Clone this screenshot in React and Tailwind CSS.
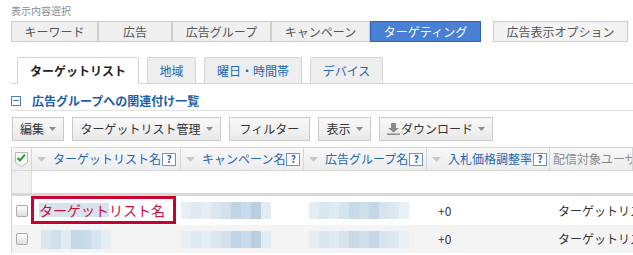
import React from 'react'

const topTabs = [
     { label: 'キーワード', width: 'w-[87px]' },
     { label: '広告', width: 'w-[74px]' },
     { label: '広告グループ', width: 'w-[99px]' },
     { label: 'キャンペーン', width: 'w-[99px]' },
]

const subTabs = [
     { label: '地域', width: 'w-[49px]' },
     { label: '曜日・時間帯', width: 'w-[98px]' },
     { label: 'デバイス', width: 'w-[73px]' },
]

// blurred cells in the screenshot, one class per 10px block
const mosaicA = ['bg-[#e8eff5]', 'bg-[#dfe9f1]', 'bg-[#e6eef4]', 'bg-[#dbe6ef]', 'bg-[#d2e1ec]', 'bg-[#bfd4e4]', 'bg-[#c9dbe8]', 'bg-[#b8cfe1]', 'bg-[#e3ecf3]']
const mosaicB = ['bg-[#e4edf4]', 'bg-[#d9e6ef]', 'bg-[#e1ebf2]', 'bg-[#d5e3ed]', 'bg-[#c6d9e7]', 'bg-[#cfdfea]', 'bg-[#c2d6e5]', 'bg-[#d7e4ee]', 'bg-[#dde8f1]', 'bg-[#e9f0f5]']
const mosaicC = ['bg-[#d9e6ef]', 'bg-[#cfdfeb]', 'bg-[#e0eaf2]', 'bg-[#c5d8e6]', 'bg-[#c9dbe8]', 'bg-[#d8e5ee]', 'bg-[#e6eef4]']

function Mosaic({ cells, className }) {
     return (
          <div className={`flex ${className}`}>
               {cells.map((c, i) => (
                    <div key={i} className={`h-full w-[10px] ${c}`} />
               ))}
          </div>
     )
}

function Caret() {
     return (
          <svg width="7" height="4" viewBox="0 0 7 4" className="ml-[5px]">
               <path d="M0 0h7L3.5 4z" fill="#8a8a8a" />
          </svg>
     )
}

function SortArrow() {
     return (
          <svg width="9" height="5" viewBox="0 0 9 5" className="mr-[7px] shrink-0">
               <path d="M0 0h9L4.5 5z" fill="#c8c8c8" />
          </svg>
     )
}

function HelpIcon() {
     return (
          <span className="ml-[1px] inline-flex h-[13px] w-[14px] shrink-0 items-center justify-center border border-[#6d93c9] bg-white text-[10px] font-bold leading-none text-[#2b62b0]">
               ?
          </span>
     )
}

function RowCheckbox() {
     return <span className="block h-[12px] w-[12px] rounded-[2px] border border-[#a9a9a9] bg-gradient-to-b from-white to-[#dedede]" />
}

function HeaderCell({ label, sortable = true, help = true }) {
     return (
          <div className="flex h-full items-center overflow-hidden whitespace-nowrap border-r border-[#d6d6d6] pl-[5px]">
               {sortable && <SortArrow />}
               <span className={sortable ? 'text-[#1d67b3]' : 'text-[#8a8a8a] -ml-[2px]'}>{label}</span>
               {help && <HelpIcon />}
          </div>
     )
}

const App = () => {
     return (
          <div className="h-[255px] w-[633px] overflow-hidden bg-white font-['Noto_Sans_CJK_JP',sans-serif] text-[12px] text-[#333]">

               {/* 表示内容選択 */}
               <div className="pl-[11px] pt-[4px] text-[10px] leading-[14px] text-[#8c8c8c]">表示内容選択</div>

               {/* top view switch */}
               <div className="mt-[3px] flex pl-[11px]">
                    {topTabs.map((t) => (
                         <div key={t.label} className={`flex h-[21px] items-center justify-center border border-[#cdcdcd] bg-[#efefef] leading-none text-[#555] ${t.width}`}>
                              {t.label}
                         </div>
                    ))}
                    <div className="flex h-[21px] w-[111px] items-center justify-center border border-[#2f64b6] bg-[#4a80d3] leading-none text-white">
                         ターゲティング
                    </div>
                    <div className="ml-[12px] flex h-[21px] w-[135px] items-center justify-center border border-[#cdcdcd] bg-[#f3f3f3] leading-none text-[#555]">
                         広告表示オプション
                    </div>
               </div>

               {/* sub tabs */}
               <div className="ml-[11px] mt-[15px] flex items-end gap-[8px] border-b border-[#d4d4d4] pl-[6px]">
                    <div className="-mb-[1px] flex h-[27px] w-[122px] items-center justify-center rounded-t-[2px] border border-b-white border-[#d4d4d4] bg-white font-bold leading-none text-[#222]">
                         ターゲットリスト
                    </div>
                    {subTabs.map((t) => (
                         <div key={t.label} className={`flex h-[26px] items-center justify-center rounded-t-[2px] border border-b-0 border-[#d4d4d4] bg-[#eeeeee] leading-none text-[#2166b0] ${t.width}`}>
                              {t.label}
                         </div>
                    ))}
               </div>

               {/* section title */}
               <div className="ml-[11px] mt-[9px] flex h-[18px] items-center border-b border-[#e2e2e2] pb-[2px]">
                    <span className="flex h-[10px] w-[10px] items-center justify-center border border-[#4d80c4]">
                         <span className="h-[1px] w-[6px] bg-[#4d80c4]" />
                    </span>
                    <span className="ml-[11px] font-bold leading-none text-[#1b5fa8]">広告グループへの関連付け一覧</span>
               </div>

               {/* toolbar */}
               <div className="ml-[12px] mt-[6px] flex gap-[8px]">
                    <button className="flex h-[24px] w-[52px] items-center justify-center border border-[#c9c9c9] bg-gradient-to-b from-[#f9f9f9] to-[#e9e9e9] leading-none text-[#333]">
                         編集<Caret />
                    </button>
                    <button className="flex h-[24px] w-[149px] items-center justify-center border border-[#c9c9c9] bg-gradient-to-b from-[#f9f9f9] to-[#e9e9e9] leading-none text-[#333]">
                         ターゲットリスト管理<Caret />
                    </button>
                    <button className="flex h-[24px] w-[81px] items-center justify-center border border-[#c9c9c9] bg-gradient-to-b from-[#f9f9f9] to-[#e9e9e9] leading-none text-[#333]">
                         フィルター
                    </button>
                    <button className="flex h-[24px] w-[53px] items-center justify-center border border-[#c9c9c9] bg-gradient-to-b from-[#f9f9f9] to-[#e9e9e9] leading-none text-[#333]">
                         表示<Caret />
                    </button>
                    <button className="flex h-[24px] w-[114px] items-center justify-center border border-[#c9c9c9] bg-gradient-to-b from-[#f9f9f9] to-[#e9e9e9] leading-none text-[#333]">
                         <svg width="13" height="12" viewBox="0 0 13 12" className="mr-[1px]">
                              <path d="M4 0h5v5h3L6.5 9.5 1 5h3z" fill="#8a8a8a" />
                              <rect x="0" y="10.5" width="13" height="1.5" fill="#8a8a8a" />
                         </svg>
                         ダウンロード<Caret />
                    </button>
               </div>

               {/* table */}
               <div className="ml-[11px] mt-[6px] border-l border-[#d6d6d6]">
                    {/* header */}
                    <div className="grid h-[24px] grid-cols-[20px_149px_123px_123px_123px_1fr] border-y border-[#d6d6d6] bg-gradient-to-b from-[#f8f8f8] to-[#ededed] leading-none">
                         <div className="flex h-full items-center justify-center border-r border-[#d6d6d6]">
                              <svg width="13" height="15" viewBox="0 0 13 15">
                                   <path d="M0.5 0.5h12v10l-6 4-6-4z" fill="#fff" stroke="#b5b5b5" />
                                   <path d="M2.5 6l2.5 2.5 5-6" fill="none" stroke="#2a9d3a" strokeWidth="2" />
                              </svg>
                         </div>
                         <HeaderCell label="ターゲットリスト名" />
                         <HeaderCell label="キャンペーン名" />
                         <HeaderCell label="広告グループ名" />
                         <HeaderCell label="入札価格調整率" />
                         <HeaderCell label="配信対象ユーザー" sortable={false} help={false} />
                    </div>

                    {/* filter row */}
                    <div className="grid h-[25px] grid-cols-[20px_1fr] border-b-[3px] border-[#d8d8d8]">
                         <div className="border-r border-[#dcdcdc] bg-[#f0f0f0]" />
                         <div />
                    </div>

                    {/* row 1 */}
                    <div className="grid h-[29px] grid-cols-[20px_149px_123px_123px_123px_1fr] items-center leading-none">
                         <div className="flex justify-center"><RowCheckbox /></div>
                         <div className="h-full">
                              <div className="-ml-[1px] flex h-[28px] w-[145px] items-center border-[3px] border-[#c8002f] pl-[5px] text-[14px] text-[#c8103c]">
                                   <span className="bg-[#d6e3ee]">ターゲット</span>リスト名
                              </div>
                         </div>
                         <Mosaic cells={mosaicA} className="h-[17px]" />
                         <Mosaic cells={mosaicB} className="ml-[5px] h-[17px]" />
                         <div className="pl-[11px]">+0</div>
                         <div className="whitespace-nowrap pl-[8px]">ターゲットリスト</div>
                    </div>

                    {/* row 2 */}
                    <div className="grid h-[28px] grid-cols-[20px_149px_123px_123px_123px_1fr] items-center bg-[#f4f4f4] leading-none">
                         <div className="flex justify-center"><RowCheckbox /></div>
                         <Mosaic cells={mosaicC} className="ml-[9px] h-[19px]" />
                         <Mosaic cells={mosaicA} className="h-[17px]" />
                         <Mosaic cells={mosaicB} className="ml-[5px] h-[17px]" />
                         <div className="pl-[11px]">+0</div>
                         <div className="whitespace-nowrap pl-[8px]">ターゲットリスト</div>
                    </div>
               </div>
          </div>
     )
}

export default App
